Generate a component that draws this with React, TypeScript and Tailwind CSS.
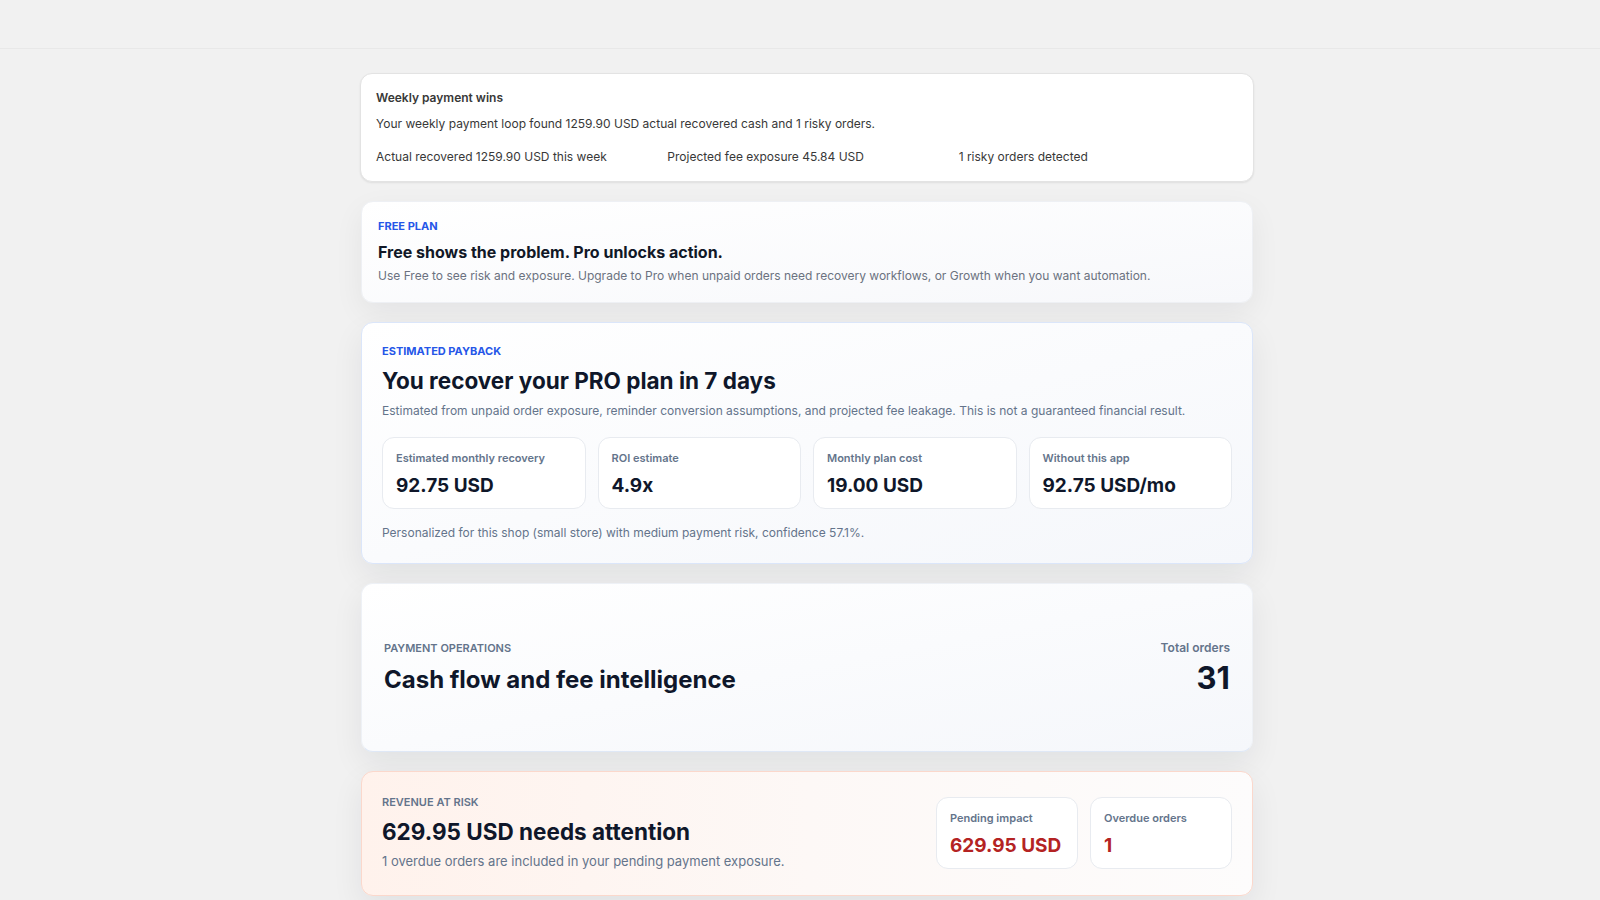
import React from 'react';

interface Stat {
  label: string;
  value: string;
  tone?: 'default' | 'danger';
}

const paybackStats: Stat[] = [
  { label: 'Estimated monthly recovery', value: '92.75 USD' },
  { label: 'ROI estimate', value: '4.9x' },
  { label: 'Monthly plan cost', value: '19.00 USD' },
  { label: 'Without this app', value: '92.75 USD/mo' },
];

const riskStats: Stat[] = [
  { label: 'Pending impact', value: '629.95 USD', tone: 'danger' },
  { label: 'Overdue orders', value: '1', tone: 'danger' },
];

function StatBox({ label, value, tone = 'default' }: Stat) {
  return (
    <div className="rounded-xl border border-[#e8ebf0] bg-white px-[13px] pt-3 pb-2">
      <p className="text-[11px] font-semibold leading-4 text-[#64748b]">{label}</p>
      <p
        className={
          tone === 'danger'
            ? 'mt-1.5 text-[19px] font-bold leading-7 text-[#b42323]'
            : 'mt-1.5 text-[19px] font-bold leading-7 text-[#0f172a]'
        }
      >
        {value}
      </p>
    </div>
  );
}

function WeeklyWins() {
  return (
    <section className="rounded-xl border border-[#e3e3e3] bg-white px-[15px] pt-[14px] pb-[14px] shadow-[0_1px_2px_rgba(0,0,0,0.08)]">
      <h2 className="text-[12px] font-semibold leading-5 text-[#383838]">Weekly payment wins</h2>
      <p className="mt-1.5 text-[12px] leading-5 text-[#383838]">
        Your weekly payment loop found 1259.90 USD actual recovered cash and 1 risky orders.
      </p>
      <div className="mt-[13px] grid grid-cols-3 gap-3 text-[12px] leading-5 text-[#383838]">
        <span>Actual recovered 1259.90 USD this week</span>
        <span>Projected fee exposure 45.84 USD</span>
        <span>1 risky orders detected</span>
      </div>
    </section>
  );
}

function PlanNotice() {
  return (
    <section className="mx-px rounded-xl border border-[#eef0f4] bg-gradient-to-br from-white to-[#f7f8fb] px-4 pt-4 pb-4 shadow-[0_10px_30px_rgba(15,23,42,0.06)]">
      <p className="text-[11px] font-bold uppercase leading-4 text-[#2556e8]">Free plan</p>
      <h2 className="mt-1.5 text-[16px] font-bold leading-6 text-[#111827]">
        Free shows the problem. Pro unlocks action.
      </h2>
      <p className="mt-0.5 text-[12px] leading-5 text-[#6b7280]">
        Use Free to see risk and exposure. Upgrade to Pro when unpaid orders need recovery workflows, or Growth when you
        want automation.
      </p>
    </section>
  );
}

function Payback() {
  return (
    <section className="mx-px rounded-xl border border-[#dbe6fa] bg-gradient-to-br from-white to-[#f5f7fb] p-5 shadow-[0_12px_32px_rgba(15,23,42,0.07)]">
      <p className="text-[11px] font-bold uppercase leading-4 text-[#2556e8]">Estimated payback</p>
      <h2 className="mt-2 text-[22.5px] font-bold leading-7 text-[#0f172a]">You recover your PRO plan in 7 days</h2>
      <p className="mt-1.5 text-[12px] leading-5 text-[#64748b]">
        Estimated from unpaid order exposure, reminder conversion assumptions, and projected fee leakage. This is not a
        guaranteed financial result.
      </p>
      <div className="mt-4 grid grid-cols-4 gap-3">
        {paybackStats.map((s) => (
          <StatBox key={s.label} {...s} />
        ))}
      </div>
      <p className="mt-3.5 text-[12px] leading-5 text-[#64748b]">
        Personalized for this shop (small store) with medium payment risk, confidence 57.1%.
      </p>
    </section>
  );
}

function Operations() {
  return (
    <section className="mx-px flex items-center justify-between rounded-xl border border-[#eef1f6] border-b-[#dfe8f6] bg-gradient-to-br from-white to-[#f5f7fb] px-[22px] pt-[56px] pb-[55px] shadow-[0_12px_32px_rgba(15,23,42,0.07)]">
      <div>
        <p className="text-[11px] font-semibold uppercase leading-4 text-[#64748b]">Payment operations</p>
        <h2 className="mt-2 text-[24px] font-bold leading-8 text-[#0f172a]">Cash flow and fee intelligence</h2>
      </div>
      <div className="text-right">
        <p className="text-[12px] font-semibold leading-4 text-[#64748b]">Total orders</p>
        <p className="mt-1 text-[31px] font-bold leading-9 text-[#0f172a]">31</p>
      </div>
    </section>
  );
}

function RevenueAtRisk() {
  return (
    <section className="mx-px flex items-center justify-between rounded-xl border border-[#fbd8cc] bg-gradient-to-r from-[#fff2ec] via-[#fdf8f6] to-[#fdfcfc] pt-[22px] pb-6 pl-5 pr-5 shadow-[0_12px_32px_rgba(15,23,42,0.07)]">
      <div>
        <p className="text-[11px] font-semibold uppercase leading-4 text-[#64748b]">Revenue at risk</p>
        <h2 className="mt-2 text-[22.5px] font-bold leading-7 text-[#0f172a]">629.95 USD needs attention</h2>
        <p className="mt-[5px] text-[13px] leading-5 text-[#64748b]">
          1 overdue orders are included in your pending payment exposure.
        </p>
      </div>
      <div className="flex gap-3">
        {riskStats.map((s) => (
          <div key={s.label} className="w-[142px]">
            <StatBox {...s} />
          </div>
        ))}
      </div>
    </section>
  );
}

export default function App() {
  return (
    <div className="min-h-screen bg-[#f1f1f1] font-['Inter','Noto_Sans',sans-serif] antialiased">
      <header className="h-[49px] border-b border-[#e8e8e8]" />
      <main className="flex justify-center pt-[24px] pb-10 pl-[14px]">
        <div className="flex w-[894px] flex-col gap-[19px]">
          <WeeklyWins />
          <PlanNotice />
          <Payback />
          <Operations />
          <RevenueAtRisk />
        </div>
      </main>
    </div>
  );
}
